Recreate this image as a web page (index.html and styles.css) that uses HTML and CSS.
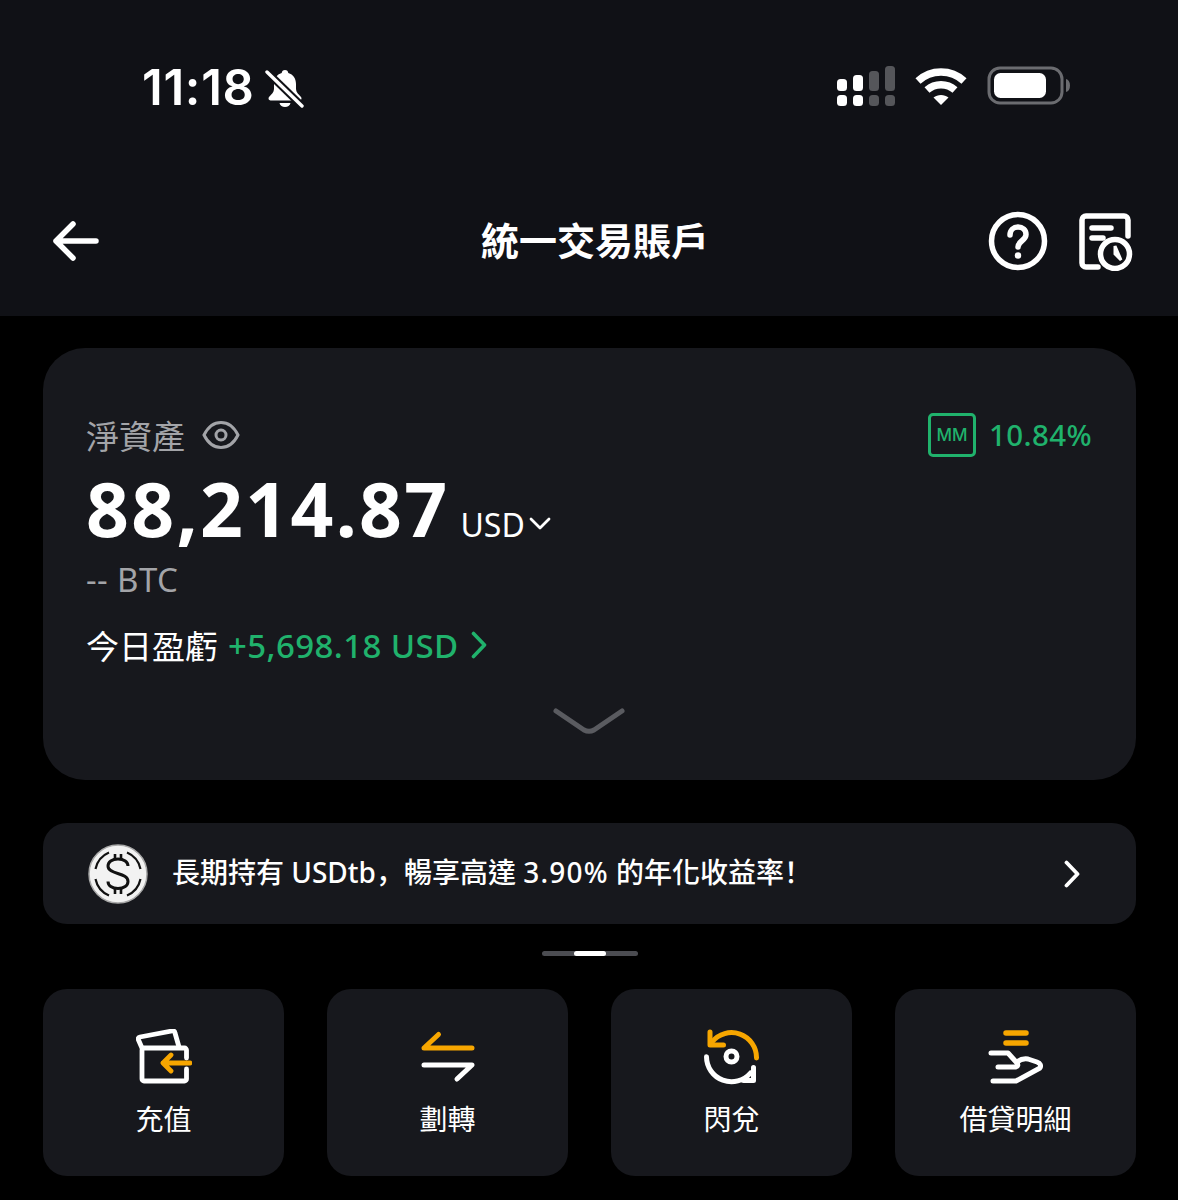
FILE: index.html
```html
<!DOCTYPE html>
<html lang="zh-Hant">
<head>
<meta charset="utf-8">
<title>統一交易賬戶</title>
<link rel="stylesheet" href="styles.css">
</head>
<body>
<header class="top">
  <div class="status">
    <div class="status-left">
      <span class="time">11:18</span>
      <svg class="bell" viewBox="0 0 40 40"><path d="M20 2c2 0 3 1.300 3.300 3 5 1.500 7.700 5.500 7.700 11v5c0 3 2.500 5.500 5 8 1 1.200.5 3.500-1.500 3.500H5.500C3.500 32.500 3 30.200 4 29c2.500-2.500 5-5 5-8v-5c0-5.500 2.700-9.500 7.700-11C17 3.300 18 2 20 2z" fill="#fff"/><path d="M14.500 35h11c-.5 2.500-2.800 4-5.500 4s-5-1.500-5.500-4z" fill="#fff"/><path d="M2 4l35 34" stroke="#101116" stroke-width="7.500"/><path d="M2 4l35 34" stroke="#fff" stroke-width="3.400" stroke-linecap="round"/></svg>
    </div>
    <div class="status-right">
      <svg class="signal" viewBox="0 0 60 40"><g fill="#fff"><rect x="1" y="13" width="10" height="12" rx="3.500"/><rect x="17" y="9" width="10" height="16" rx="3.500"/><rect x="1" y="29" width="10" height="11" rx="3.500"/><rect x="17" y="29" width="10" height="11" rx="3.500"/></g><g fill="#55565a"><rect x="33" y="5" width="10" height="20" rx="3.500"/><rect x="49" y="0" width="10" height="25" rx="3.500"/><rect x="33" y="29" width="10" height="11" rx="3.500"/><rect x="49" y="29" width="10" height="11" rx="3.500"/></g></svg>
      <svg class="wifi" viewBox="0 0 52 38" fill="none" stroke="#fff" stroke-width="7.500"><path d="M3 13C16 1 36 1 49 13"/><path d="M12 22c8-7 20-7 28 0"/><path d="M26 37l-7.500-7.500c4-3.500 11-3.500 15 0z" fill="#fff" stroke="none"/></svg>
      <svg class="battery" viewBox="0 0 84 40"><rect x="2" y="2" width="73" height="35" rx="11" fill="none" stroke="#6b6c70" stroke-width="3"/><rect x="7" y="7" width="52" height="25" rx="6.500" fill="#fff"/><path d="M79 13c2.500.5 4 3 4 6.500s-1.500 6-4 6.500z" fill="#6b6c70"/></svg>
    </div>
  </div>
  <nav class="nav">
    <svg class="back" viewBox="0 0 46 40" fill="none" stroke="#fff" stroke-width="5.500" stroke-linecap="round" stroke-linejoin="round"><path d="M43 20H3M20 3L3 20l17 17"/></svg>
    <h1 class="title">統一交易賬戶</h1>
    <div class="nav-icons">
      <svg class="help" viewBox="0 0 60 60" fill="none" stroke="#fff" stroke-width="5.500" stroke-linecap="round"><circle cx="30" cy="30" r="26.500"/><path d="M22 24c0-5 3.500-8 8-8s8 3 8 7.500c0 6-8 6.500-8 12.500"/><circle cx="30" cy="44.500" r="3.200" fill="#fff" stroke="none"/></svg>
      <svg class="record" viewBox="0 0 54 58" fill="none" stroke="#fff" stroke-width="5.500" stroke-linecap="round"><path d="M19 54H7a4 4 0 0 1-4-4V7a4 4 0 0 1 4-4h38a4 4 0 0 1 4 4v16"/><path d="M13 15h19M13 25h11"/><circle cx="36" cy="41" r="14.500"/><path d="M36 33v8l6 6z" stroke-width="3" fill="#fff"/></svg>
    </div>
  </nav>
</header>

<main class="content">
  <section class="card">
    <div class="card-head">
      <div class="label-row">
        <span class="label">淨資產</span>
        <svg class="eye" viewBox="0 0 38 30" fill="none" stroke="#a3a4a8" stroke-width="3"><path d="M2 15C6 7 12 2.500 19 2.500S32 7 36 15c-4 8-10 12.500-17 12.500S6 23 2 15z"/><circle cx="19" cy="15" r="5"/></svg>
      </div>
      <div class="mm">
        <span class="mm-box">MM</span>
        <span class="mm-value">10.84%</span>
      </div>
    </div>
    <div class="balance-row">
      <span class="balance">88,214.87</span>
      <span class="currency">USD</span>
      <svg class="caret" viewBox="0 0 22 14" fill="none" stroke="#fff" stroke-width="2.800" stroke-linecap="round" stroke-linejoin="round"><path d="M2 3l9 9 9-9"/></svg>
    </div>
    <div class="btc">-- BTC</div>
    <div class="pnl-row">
      <span class="pnl-label">今日盈虧</span>
      <span class="pnl-value">+5,698.18 USD</span>
      <svg class="pnl-arrow" viewBox="0 0 16 28" fill="none" stroke="#20b26c" stroke-width="3.600" stroke-linecap="round" stroke-linejoin="round"><path d="M2.500 2.500L13.500 14 2.500 25.500"/></svg>
    </div>
    <svg class="expand" viewBox="0 0 72 26" fill="none" stroke="#5a5b60" stroke-width="5" stroke-linecap="round" stroke-linejoin="round"><path d="M3 3l28 19q5 2.500 10 0L69 3"/></svg>
  </section>

  <a class="banner">
    <svg class="coin" viewBox="0 0 60 60"><circle cx="30" cy="30" r="29" fill="#f2f2f2"/><circle cx="30" cy="30" r="29" fill="none" stroke="#a9a9a9" stroke-width="1.500"/><g fill="none" stroke="#111" stroke-width="2.200"><path d="M7.500 25A23 23 0 0 1 21 8.500M39 8.500A23 23 0 0 1 52.500 25M52.500 35A23 23 0 0 1 39 51.500M21 51.500A23 23 0 0 1 7.500 35"/><path stroke-width="3" d="M40 22c0-4-4-7-10-7s-10 3-10 7c0 9 20 6 20 15.500 0 4-4 7-10 7s-10-3-10-7"/><path stroke-width="2.600" d="M27 10v5M33 10v5M27 45v5M33 45v5"/></g></svg>
    <span class="banner-text">長期持有 USDtb<span class="punct" lang="zh-Hans">，</span>暢享高達 <span class="num">3.90%</span> 的年化收益率<span class="punct" lang="zh-Hans">！</span></span>
    <svg class="banner-arrow" viewBox="0 0 16 28" fill="none" stroke="#fff" stroke-width="3.800" stroke-linecap="round" stroke-linejoin="round"><path d="M2.500 2.500L13.500 14 2.500 25.500"/></svg>
  </a>

  <div class="pager"><span class="pager-dot"></span></div>

  <div class="actions">
    <a class="action">
      <svg class="action-icon" viewBox="0 0 56 56" fill="none" stroke-width="4.800" stroke-linecap="round" stroke-linejoin="round"><path d="M6 19L2.500 11Q1.500 8.500 4 8L36 2Q38.500 1.500 39 4L43 18" stroke="#fff"/><path d="M50.500 29V21a2 2 0 0 0-2-2H8a2 2 0 0 0-2 2v29a2 2 0 0 0 2 2h40.500a2 2 0 0 0 2-2V40" stroke="#fff"/><path d="M54 34H27M35 26l-8 8 8 8" stroke="#f7a600"/></svg>
      <span class="action-label">充值</span>
    </a>
    <a class="action">
      <svg class="action-icon" viewBox="0 0 56 56" fill="none" stroke-width="5" stroke-linecap="round" stroke-linejoin="round"><path d="M52 19H4L18.500 5.500" stroke="#f7a600"/><path d="M4 36h48L37 50" stroke="#fff"/></svg>
      <span class="action-label">劃轉</span>
    </a>
    <a class="action">
      <svg class="action-icon" viewBox="0 0 56 56" fill="none" stroke-width="5" stroke-linecap="round" stroke-linejoin="round"><path d="M8 13A25 25 0 0 1 52.500 29" stroke="#f7a600"/><path d="M6 3v13h13.500" stroke="#f7a600"/><path d="M2.500 27.700A25 25 0 0 0 46.500 44" stroke="#fff"/><path d="M39.500 51.500h10v-13" stroke="#fff"/><circle cx="27.500" cy="27.500" r="5.500" stroke="#fff"/></svg>
      <span class="action-label">閃兌</span>
    </a>
    <a class="action action-wide">
      <svg class="action-icon" viewBox="0 0 56 56" fill="none" stroke-width="5" stroke-linecap="round" stroke-linejoin="round"><path d="M18 4h20M18 14h20" stroke="#f7a600" stroke-width="5.500"/><path d="M3 24h17l9 10q2 3-1 4H10" stroke="#fff"/><path d="M29 33q5-4 11-3l9 3q5 2 3 6L28 52H5" stroke="#fff"/></svg>
      <span class="action-label">借貸明細</span>
    </a>
  </div>
</main>
</body>
</html>
```
FILE: styles.css
```css
* { box-sizing: border-box; }
html, body { margin: 0; padding: 0; }
body {
  width: 1178px;
  height: 1200px;
  overflow: hidden;
  background: #000;
  color: #fff;
  font-family: "Noto Sans", "Noto Sans CJK TC", sans-serif;
}
.top {
  height: 316px;
  background: #101116;
  display: flex;
  flex-direction: column;
}
.status {
  height: 174px;
  padding: 60px 107px 0 142px;
  display: flex;
  justify-content: space-between;
  align-items: flex-start;
}
.status-left { display: flex; align-items: center; gap: 10px; height: 55px; }
.time { font-family: Inter, sans-serif; font-size: 49px; font-weight: 600; line-height: 55px; letter-spacing: 0.7px; }
.bell { width: 40px; height: 40px; }
.status-right { display: flex; align-items: center; height: 52px; }
.signal { width: 60px; height: 40px; margin-right: 19px; margin-left: -1px; }
.wifi { width: 52px; height: 38px; margin-right: 20px; margin-top: 2px; }
.battery { width: 84px; height: 40px; }
.nav {
  position: relative;
  height: 134px;
  padding: 0 45px 0 53px;
  display: flex;
  align-items: flex-start;
  justify-content: space-between;
}
.back { width: 46px; height: 40px; margin-top: 47px; }
.title {
  margin: 37px 0 0;
  font-family: "Noto Sans CJK TC", sans-serif;
  font-size: 38px;
  font-weight: 700;
  line-height: 56px;
  position: absolute;
  left: 481px;
}
.nav-icons { display: flex; gap: 31px; margin-top: 38px; }
.help { width: 60px; height: 60px; margin-top: -1px; margin-left: -1px; }
.record { width: 54px; height: 58px; margin-top: 1px; }

.content { padding: 32px 42px 0 43px; }
.card {
  height: 432px;
  border-radius: 42px;
  background: #17181d;
  padding: 62px 44px 0 43px;
  display: flex;
  flex-direction: column;
}
.card-head { display: flex; justify-content: space-between; align-items: center; height: 50px; }
.label-row { display: flex; align-items: center; gap: 17px; }
.label { font-size: 33px; color: #a3a4a8; line-height: 50px; font-family: "Noto Sans CJK TC", sans-serif; }
.eye { width: 38px; height: 30px; }
.mm { display: flex; align-items: center; gap: 13px; }
.mm-box {
  width: 48px;
  height: 44px;
  border: 3px solid #20b26c;
  border-radius: 5px;
  color: #20b26c;
  font-family: Inter, sans-serif;
  font-size: 17px;
  font-weight: 500;
  display: flex;
  align-items: center;
  justify-content: center;
}
.mm-value { font-size: 29.500px; color: #20b26c; line-height: 44px; font-weight: 500; letter-spacing: 0.4px; font-family: "Noto Sans", sans-serif; }
.balance-row { display: flex; align-items: baseline; margin-top: 2px; height: 92px; }
.balance { font-family: "Noto Sans", sans-serif; font-size: 75px; font-weight: 700; line-height: 92px; letter-spacing: 2.300px; }
.currency { font-size: 32px; color: #fff; margin-left: 11px; }
.caret { width: 22px; height: 14px; margin-left: 4px; align-self: center; margin-top: 30px; }
.btc { font-size: 33px; letter-spacing: 0.4px; color: #a3a4a8; line-height: 42px; margin-top: 5px; }
.pnl-row { display: flex; align-items: center; margin-top: 22px; height: 44px; }
.pnl-label { font-family: "Noto Sans CJK TC", sans-serif; font-size: 33px; color: #fff; margin-right: 10px; }
.pnl-value { font-size: 33px; letter-spacing: 0.4px; color: #20b26c; font-weight: 500; margin-right: 12px; }
.pnl-arrow { width: 16px; height: 28px; }
.expand { width: 72px; height: 26px; align-self: center; margin-top: 41px; }

.banner {
  margin-top: 43px;
  height: 101px;
  background: #17181d;
  border-radius: 24px;
  padding: 0 56px 0 45px;
  display: flex;
  align-items: center;
}
.coin { width: 60px; height: 60px; flex: none; }
.banner-text { font-size: 28px; font-weight: 500; color: #fff; margin: -6px 0 0 24px; flex: 1; white-space: nowrap; }
.num { letter-spacing: 1.2px; }
.punct { font-family: "Noto Sans CJK SC", sans-serif; }
.banner-arrow { width: 16px; height: 28px; }

.pager {
  width: 96px;
  height: 5px;
  margin: 27px auto 0;
  border-radius: 3px;
  background: #4b4c51;
  display: flex;
  justify-content: center;
}
.pager-dot { width: 32px; height: 5px; border-radius: 3px; background: #fff; }

.actions {
  margin-top: 33px;
  display: grid;
  grid-template-columns: repeat(4, 241px);
  gap: 43px;
}
.action {
  height: 187px;
  border-radius: 24px;
  background: #17181d;
  display: flex;
  flex-direction: column;
  align-items: center;
  padding-top: 40px;
}
.action-icon { width: 56px; height: 56px; }
.action-label { margin-top: 12px; font-size: 28px; line-height: 42px; font-family: "Noto Sans CJK TC", sans-serif; color: #fff; }
```
